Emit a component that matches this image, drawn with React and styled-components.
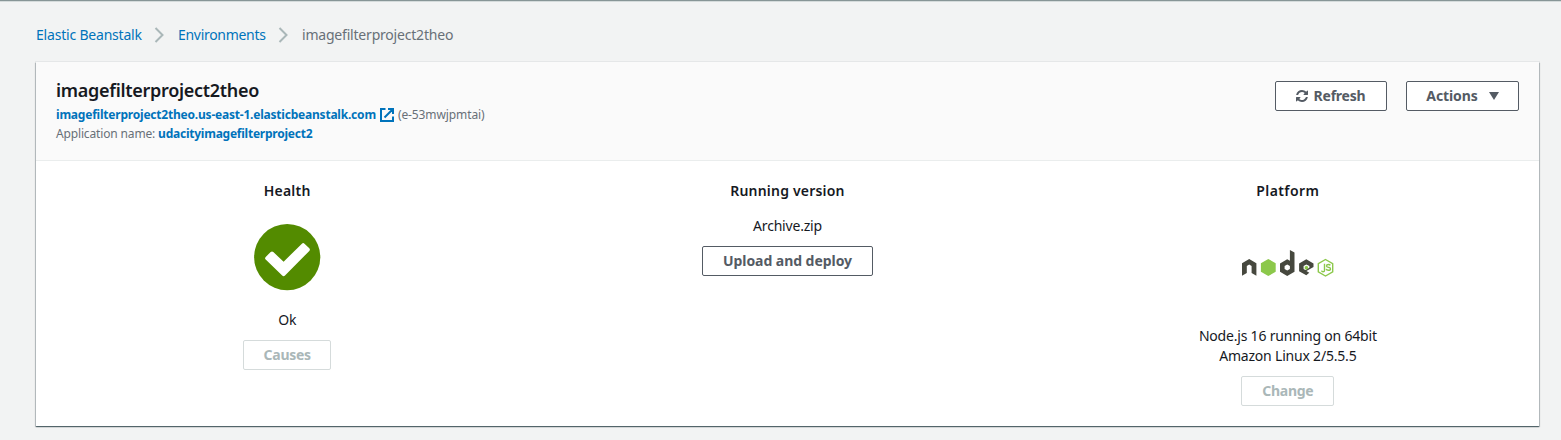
import React from 'react';
import styled, { createGlobalStyle } from 'styled-components';

const GlobalStyle = createGlobalStyle`
  * { box-sizing: border-box; }
  body {
    margin: 0;
    background: #f2f3f3;
    color: #16191f;
    font: 14px/20px "Noto Sans", "Open Sans", sans-serif;
  }
`;

const Page = styled.div`
  height: 440px;
  border-top: 1px solid #879596;
  box-shadow: inset 0 1px 0 #d5dbdb;
  padding: 24px 22px 0 36px;
  overflow: hidden;
`;

const Breadcrumbs = styled.nav`
  display: flex;
  align-items: center;
  height: 20px;
  margin-bottom: 17px;
  svg { margin: 0 13px 0 12px; flex: none; }
`;

const Crumb = styled.span`
  width: ${(p) => p.$width}px;
  white-space: nowrap;
  color: ${(p) => (p.$current ? '#687078' : '#0073bb')};
  letter-spacing: ${(p) => p.$spacing || 0}px;
`;

const Card = styled.section`
  height: 364px;
  background: #fff;
  box-shadow: 0 1px 1px 0 rgba(0, 28, 36, 0.5), 1px 1px 1px 0 rgba(0, 28, 36, 0.15),
    -1px 1px 1px 0 rgba(0, 28, 36, 0.15), 0 0 0 1px rgba(0, 28, 36, 0.05);
`;

const Header = styled.header`
  display: flex;
  justify-content: space-between;
  height: 99px;
  padding: 19px 20px 0;
  background: #fafafa;
  border-bottom: 1px solid #eaeded;
`;

const Title = styled.h1`
  margin: 0 0 5px;
  font-size: 18px;
  line-height: 19px;
  font-weight: 600;
  letter-spacing: -0.29px;
`;

const Detail = styled.div`
  display: flex;
  align-items: center;
  height: 19px;
  font-size: 12px;
  white-space: nowrap;
  color: #687078;
  letter-spacing: ${(p) => p.$spacing || 0}px;
  svg { margin: 0 4px 0 4px; flex: none; }
`;

const BoldLink = styled.span`
  font-weight: 700;
  color: #0073bb;
  letter-spacing: ${(p) => p.$spacing || 0}px;
`;

const Actions = styled.div`
  display: flex;
  gap: 19px;
`;

const Button = styled.button`
  display: flex;
  align-items: center;
  justify-content: center;
  width: ${(p) => p.$width}px;
  height: 30px;
  padding: 0;
  border: 1px solid ${(p) => (p.disabled ? '#d5dbdb' : '#545b64')};
  border-radius: 2px;
  background: #fff;
  color: ${(p) => (p.disabled ? '#aab7b8' : '#545b64')};
  font: 700 14px/20px "Noto Sans", "Open Sans", sans-serif;
  letter-spacing: ${(p) => p.$spacing || 0}px;
  white-space: nowrap;
`;

const Columns = styled.div`
  display: grid;
  grid-template-columns: repeat(3, 1fr);
  padding: 20px 1px 0;
`;

const Column = styled.div`
  display: flex;
  flex-direction: column;
  align-items: center;
  text-align: center;
`;

const Heading = styled.h2`
  margin: 0;
  font-size: 14px;
  line-height: 20px;
  font-weight: 600;
  letter-spacing: ${(p) => p.$spacing || 0}px;
`;

const Value = styled.div`
  margin: ${(p) => p.$top}px 0 10px;
  letter-spacing: ${(p) => p.$spacing || 0}px;
`;

const HealthIcon = styled.svg`
  margin-top: 23px;
`;

const PlatformLogo = styled.svg`
  margin-top: 49px;
`;

const Chevron = () => (
  <svg width="11" height="18" viewBox="0 0 11 18" fill="none" stroke="#aab7b8" strokeWidth="2">
    <path d="M1.5 2 8.500 9l-7 7" />
  </svg>
);

const External = () => (
  <svg width="14" height="14" viewBox="0 0 14 14" fill="none" stroke="#0073bb" strokeWidth="2">
    <path d="M5.500 1H1v12h12V8.500M8 1h5v5M12.500 1.500 4.500 9.500" />
  </svg>
);

const RefreshGlyph = styled.svg`
  margin-right: 5px;
`;

const RefreshIcon = () => (
  <RefreshGlyph width="12" height="12" viewBox="0 0 1536 1536" fill="currentColor">
    <path d="M1511 928q0 5-1 7-64 268-268 434.500T764 1536q-146 0-282.500-55T238 1324l-129 129q-19 19-45 19t-45-19-19-45V960q0-26 19-45t45-19h448q26 0 45 19t19 45-19 45l-137 137q71 66 161 102t187 36q134 0 250-65t186-179q11-17 53-117 8-23 30-23h192q13 0 22.500 9.500t9.500 22.500zm25-800v448q0 26-19 45t-45 19h-448q-26 0-45-19t-19-45 19-45l138-138Q969 256 768 256q-134 0-250 65T332 500q-11 17-53 117-8 23-30 23H50q-13 0-22.500-9.500T18 608v-7q65-268 270-434.500T768 0q146 0 284 55.500T1297 212l130-129q19-19 45-19t45 19 19 45z" />
  </RefreshGlyph>
);

const Caret = styled.span`
  margin-left: 11px;
  border: 5.500px solid transparent;
  border-top: 8px solid currentColor;
  border-bottom: 0;
`;

const NodeLogo = () => (
  <PlatformLogo width="92" height="27" viewBox="0 0 92 27">
    <g fill="#46483e">
      <path d="M0 25.700V13.200L7.200 9l7.200 4.200v12.500l-4.800-2.700v-7.100L7.200 14.400l-2.400 1.500V23z" />
      <path fillRule="evenodd" d="M47.900 0l4.600 2.600v19.200L45.200 26 38 21.800v-8.400l7.200-4.200 2.700 1.500zM45.200 14.600l-2.600 1.500v3l2.600 1.500 2.700-1.500v-3z" />
      <path fillRule="evenodd" d="M64.300 9.200l7.200 4.200V17l-7.100 4.100 2.900 1.600-3 2.500-7.200-4v-7.800zm0 5.200-2.700 1.600v3.100l1.700 1 4.100-2.400V16z" />
    </g>
    <path fill="#8cc84b" d="M26.300 9l7.400 4.200v8.600l-7.400 4.300-7.400-4.300v-8.600zM64.400 15.800l1.700 1v1.900l-1.700 1-1.700-1v-1.900z" />
    <g fill="none" stroke="#8cc84b" strokeWidth="1.400">
      <path d="M83.500 9.500l7.200 4.100v8.300l-7.200 4.100-7.200-4.100v-8.300z" />
      <path d="M82.500 13.700v6.700q0 1.400-1.400 1.400-1.300 0-1.500-1.100M88.300 15.400q-.4-.9-1.900-.9-1.900 0-1.900 1.400 0 1.100 1.900 1.400 2.100.2 2.100 1.600t-2.100 1.400q-2 0-2.200-1.400" />
    </g>
  </PlatformLogo>
);

export default function App() {
  return (
    <>
      <GlobalStyle />
      <Page>
        <Breadcrumbs>
          <Crumb $width={106} $spacing={-0.2}>Elastic Beanstalk</Crumb>
          <Chevron />
          <Crumb $width={88} $spacing={-0.3}>Environments</Crumb>
          <Chevron />
          <Crumb $width={152} $spacing={-0.2} $current>imagefilterproject2theo</Crumb>
        </Breadcrumbs>
        <Card>
          <Header>
            <div>
              <Title>imagefilterproject2theo</Title>
              <Detail $spacing={-0.1}>
                <BoldLink $spacing={-0.21}>imagefilterproject2theo.us-east-1.elasticbeanstalk.com</BoldLink>
                <External />
                (e-53mwjpmtai)
              </Detail>
              <Detail $spacing={-0.15}>
                Application name:&nbsp;<BoldLink $spacing={-0.24}>udacityimagefilterproject2</BoldLink>
              </Detail>
            </div>
            <Actions>
              <Button $width={112} $spacing={-0.2}><RefreshIcon />Refresh</Button>
              <Button $width={113} $spacing={-0.1}>Actions<Caret /></Button>
            </Actions>
          </Header>
          <Columns>
            <Column>
              <Heading $spacing={0.25}>Health</Heading>
              <HealthIcon width="67" height="67" viewBox="0 0 67 67">
                <circle cx="33.200" cy="33.200" r="33.100" fill="#538b00" />
                <path d="M29.600 37.700 47.900 19.700q1.300-1.200 2.600 0l4.800 4.600q1.200 1.300 0 2.600L31 51.600q-1.400 1.300-2.800 0L11.700 35.500q-1.300-1.300 0-2.600l5-4.900q1.300-1.200 2.600 0z" fill="#fff" />
              </HealthIcon>
              <Value $top={19} $spacing={-0.2}>Ok</Value>
              <Button $width={88} $spacing={-0.3} disabled>Causes</Button>
            </Column>
            <Column>
              <Heading $spacing={0.2}>Running version</Heading>
              <Value $top={15} $spacing={-0.2}>Archive.zip</Value>
              <Button $width={171} $spacing={-0.05}>Upload and deploy</Button>
            </Column>
            <Column>
              <Heading $spacing={0.4}>Platform</Heading>
              <NodeLogo />
              <Value $top={49} $spacing={-0.2}>Node.js 16 running on 64bit<br />Amazon Linux 2/5.5.5</Value>
              <Button $width={93} $spacing={-0.3} disabled>Change</Button>
            </Column>
          </Columns>
        </Card>
      </Page>
    </>
  );
}
